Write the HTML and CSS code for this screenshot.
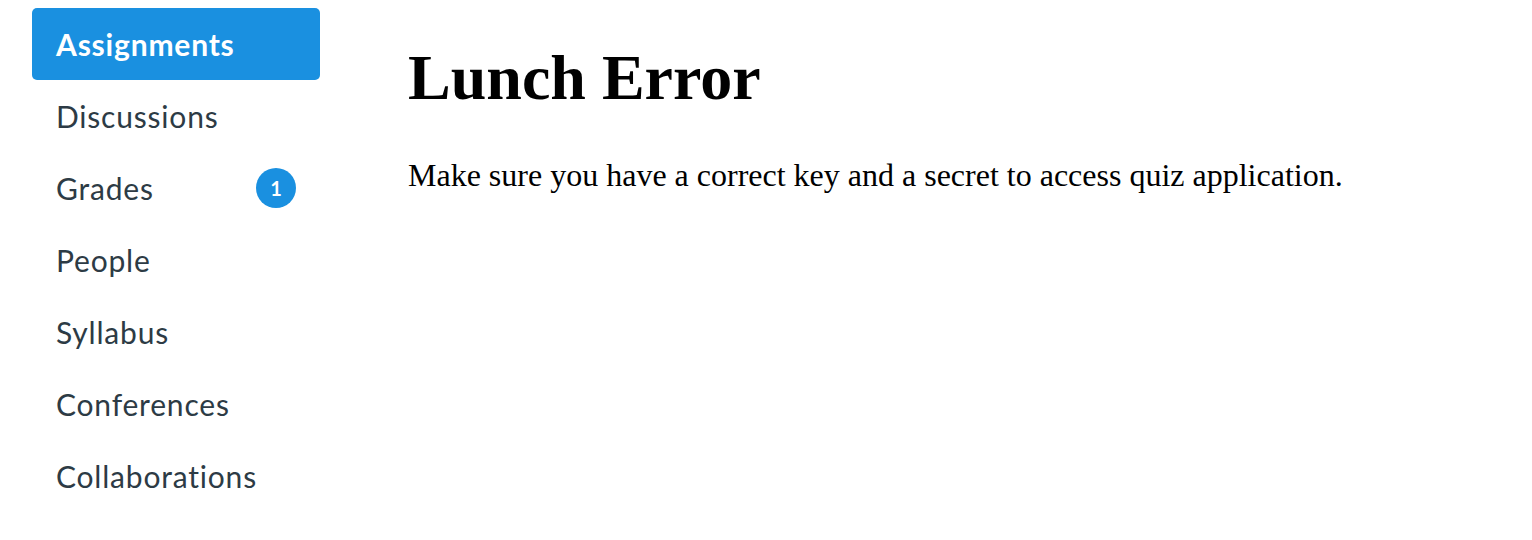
FILE: index.html
```html
<!DOCTYPE html>
<html>
<head>
<meta charset="utf-8">
<link rel="stylesheet" href="styles.css">
</head>
<body>
<div class="page">
  <nav class="sidebar">
    <a class="nav-item active">Assignments</a>
    <a class="nav-item">Discussions</a>
    <a class="nav-item">Grades <span class="badge">1</span></a>
    <a class="nav-item">People</a>
    <a class="nav-item">Syllabus</a>
    <a class="nav-item">Conferences</a>
    <a class="nav-item">Collaborations</a>
  </nav>
  <main class="content">
    <h1 class="title">Lunch Error</h1>
    <p class="message">Make sure you have a correct key and a secret to access quiz application.</p>
  </main>
</div>
</body>
</html>
```
FILE: styles.css
```css
html, body { margin: 0; padding: 0; background: #fff; }
.page { display: flex; }
.sidebar {
  display: flex;
  flex-direction: column;
  padding: 8px 0 0 32px;
  width: 288px;
  flex: none;
}
.nav-item {
  display: flex;
  align-items: center;
  justify-content: space-between;
  height: 72px;
  padding: 0 24px 0 24px;
  font-family: Lato, "Noto Sans", sans-serif;
  font-size: 30px;
  letter-spacing: 0.8px;
  color: #2d3b45;
  border-radius: 5px;
}
.nav-item.active {
  background: #1a90e0;
  color: #fff;
  font-weight: bold;
}
.badge {
  width: 40px;
  height: 40px;
  border-radius: 50%;
  background: #1a90e0;
  color: #fff;
  font-size: 20px;
  letter-spacing: 0;
  font-weight: bold;
  display: flex;
  align-items: center;
  justify-content: center;
}
.content {
  padding-left: 88px;
  font-family: "Liberation Serif", "Times New Roman", serif;
  color: #000;
}
.title {
  font-size: 64px;
  font-weight: bold;
  margin: 41px 0 0 0;
  line-height: 74px;
}
.message {
  font-size: 32px;
  margin: 42px 0 0 0;
  line-height: 36px;
}
```
